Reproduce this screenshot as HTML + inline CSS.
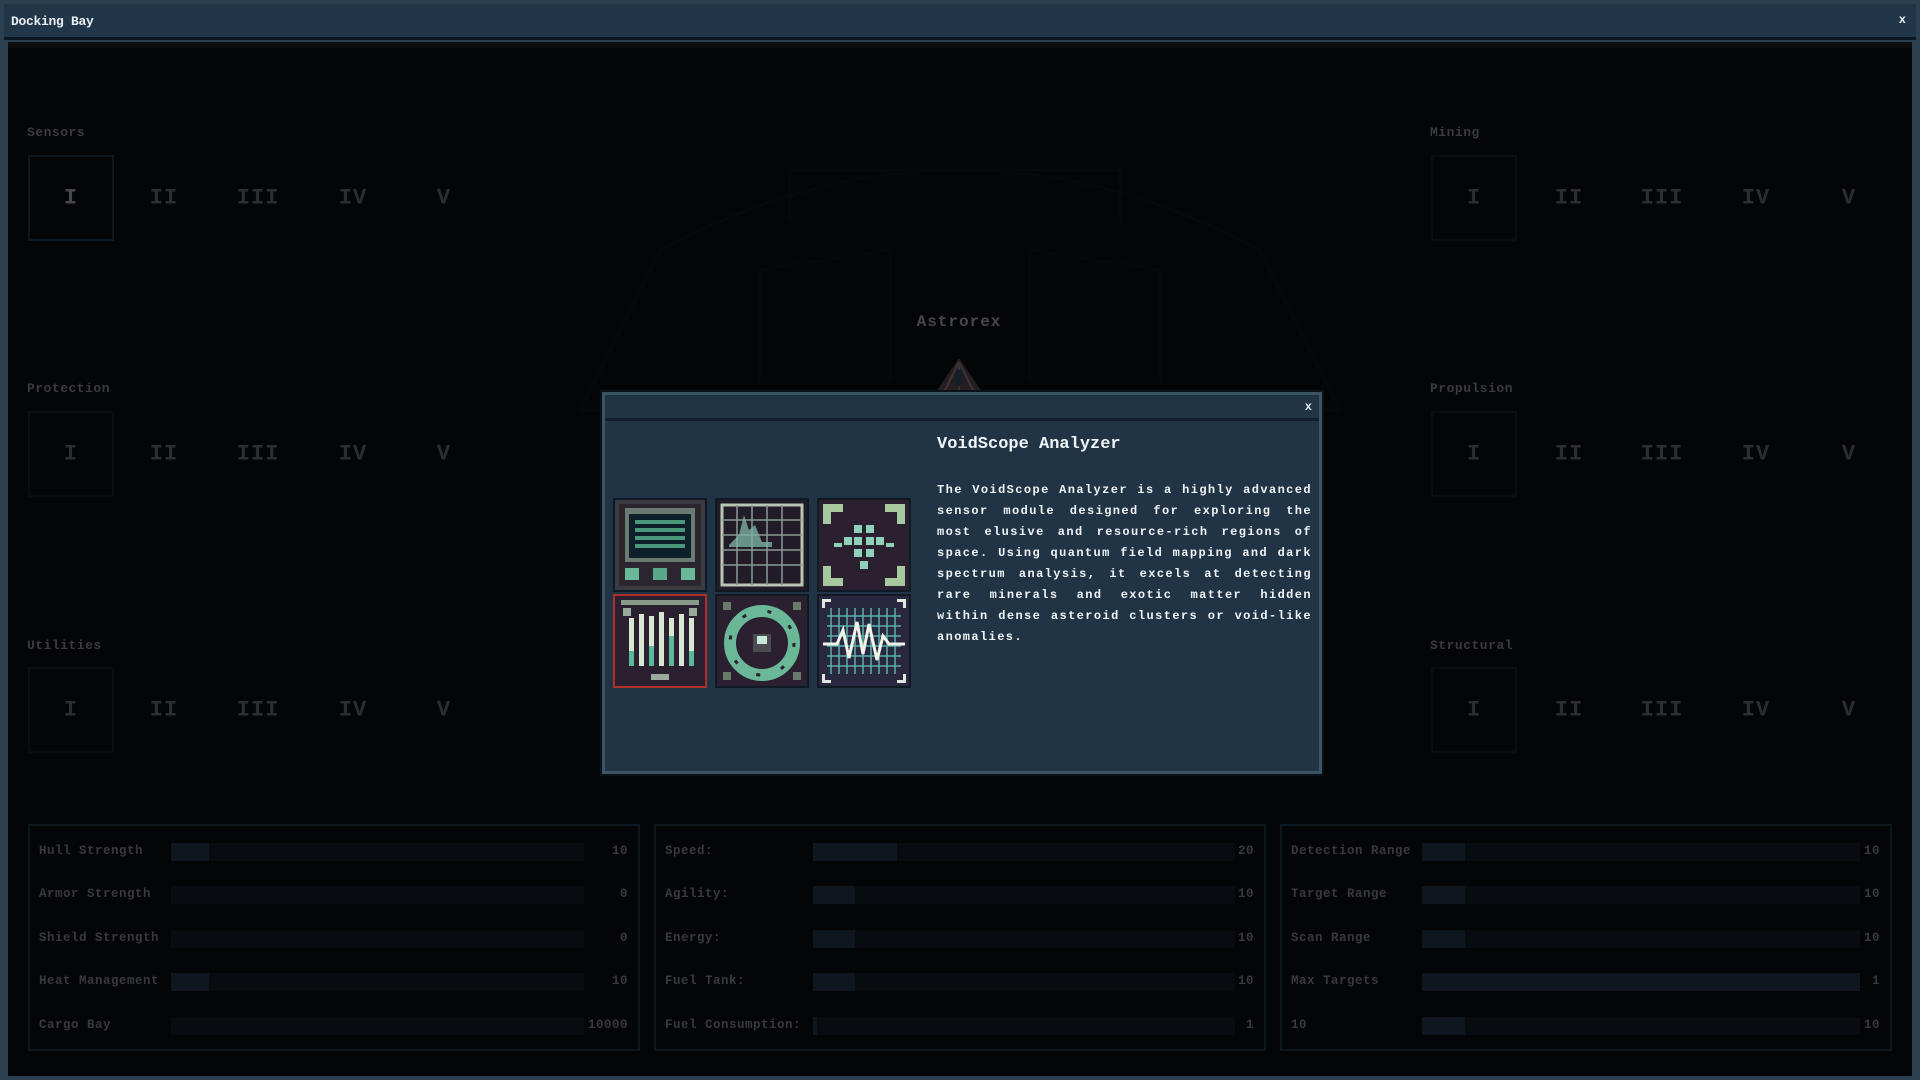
<!DOCTYPE html>
<html><head><meta charset="utf-8"><style>
*{margin:0;padding:0;box-sizing:border-box}
body{width:1920px;height:1080px;background:#2b4152;position:relative;overflow:hidden;font-family:"Liberation Mono",monospace;font-weight:bold}
.abs{position:absolute}
#title{left:4px;top:4px;width:1912px;height:36px;background:#22364a;border-bottom:3px solid #0d1822}
#title span{position:absolute;left:7px;top:10px;color:#e8eef2;font-size:13px;letter-spacing:-0.3px}
#title b{position:absolute;right:10px;top:9px;color:#e8eef2;font-size:12px}
#main{left:8px;top:42px;width:1904px;height:1034px;background:#040506;border-top:6px solid #0b0e10}
.lbl{color:#383c40;font-size:13px;letter-spacing:0.5px}
.num{color:#2a2e32;font-size:22px;transform:translate(-50%,-50%);font-family:"Liberation Mono",monospace;font-weight:bold;letter-spacing:1px}
.num.act{color:#46494c}
.box{border:2px solid #080d11;width:86px;height:86px}
.box.act{border-color:#0e1820}
.panel{border:2px solid #0c1820;height:227px;top:824px}
.srow{position:absolute;left:0;right:0;height:20px;font-size:12.5px;color:#363a3e;letter-spacing:0.5px}
.srow .l{position:absolute;top:1px}
.srow .bar{position:absolute;top:0;height:18px;background:#080b0f}
.srow .bar i{position:absolute;left:0;top:0;bottom:0;background:#0e1720}
.srow .v{position:absolute;top:1px;text-align:right}
#modal{left:602px;top:392px;width:720px;height:382px;background:#213446;border:3px solid #3a5466;box-shadow:0 0 0 2px #0a1218}
#mh{position:absolute;left:0;top:0;right:0;height:26px;border-bottom:3px solid #112030}
#mh b{position:absolute;right:7px;top:5px;color:#e8eef2;font-size:12px}
#mt{position:absolute;left:332px;top:40px;color:#f0f4f6;font-size:17px;letter-spacing:0px}
#md{position:absolute;left:332px;top:85px;width:375px;color:#f0f4f6;font-size:12px;line-height:21px;text-align:justify;letter-spacing:1.4px}
.tile{position:absolute;width:94px;height:94px;background:#0e1a24;padding:2px}
.tile svg{display:block;width:90px;height:90px}
</style></head><body>
<div id="title" class="abs"><span>Docking Bay</span><b>x</b></div>
<div id="main" class="abs"></div>

<svg class="abs" style="left:560px;top:130px" width="800" height="290" viewBox="0 0 800 290">
<g fill="none" stroke="#060809" stroke-width="3">
<path d="M230 40 H560 V90 H230Z"/><path d="M100 120 Q400 -40 700 120 L780 280 H20Z"/>
<path d="M200 140 L330 120 V250 H200Z"/><path d="M600 140 L470 120 V250 H600Z"/>
</g></svg>

<div class="abs lbl" style="left:27px;top:125px">Sensors</div>
<div class="abs lbl" style="left:27px;top:381px">Protection</div>
<div class="abs lbl" style="left:27px;top:638px">Utilities</div>
<div class="abs lbl" style="left:1430px;top:125px">Mining</div>
<div class="abs lbl" style="left:1430px;top:381px">Propulsion</div>
<div class="abs lbl" style="left:1430px;top:638px">Structural</div>

<div class="abs box act" style="left:28px;top:155px"></div>
<div class="abs box" style="left:28px;top:411px"></div>
<div class="abs box" style="left:28px;top:667px"></div>
<div class="abs box" style="left:1431px;top:155px"></div>
<div class="abs box" style="left:1431px;top:411px"></div>
<div class="abs box" style="left:1431px;top:667px"></div>

<div class="abs num act" style="left:71px;top:198px">I</div>
<div class="abs num" style="left:164px;top:198px">II</div>
<div class="abs num" style="left:258px;top:198px">III</div>
<div class="abs num" style="left:353px;top:198px">IV</div>
<div class="abs num" style="left:444px;top:198px">V</div>
<div class="abs num" style="left:71px;top:454px">I</div>
<div class="abs num" style="left:164px;top:454px">II</div>
<div class="abs num" style="left:258px;top:454px">III</div>
<div class="abs num" style="left:353px;top:454px">IV</div>
<div class="abs num" style="left:444px;top:454px">V</div>
<div class="abs num" style="left:71px;top:710px">I</div>
<div class="abs num" style="left:164px;top:710px">II</div>
<div class="abs num" style="left:258px;top:710px">III</div>
<div class="abs num" style="left:353px;top:710px">IV</div>
<div class="abs num" style="left:444px;top:710px">V</div>
<div class="abs num" style="left:1474px;top:198px">I</div>
<div class="abs num" style="left:1569px;top:198px">II</div>
<div class="abs num" style="left:1662px;top:198px">III</div>
<div class="abs num" style="left:1756px;top:198px">IV</div>
<div class="abs num" style="left:1849px;top:198px">V</div>
<div class="abs num" style="left:1474px;top:454px">I</div>
<div class="abs num" style="left:1569px;top:454px">II</div>
<div class="abs num" style="left:1662px;top:454px">III</div>
<div class="abs num" style="left:1756px;top:454px">IV</div>
<div class="abs num" style="left:1849px;top:454px">V</div>
<div class="abs num" style="left:1474px;top:710px">I</div>
<div class="abs num" style="left:1569px;top:710px">II</div>
<div class="abs num" style="left:1662px;top:710px">III</div>
<div class="abs num" style="left:1756px;top:710px">IV</div>
<div class="abs num" style="left:1849px;top:710px">V</div>

<div class="abs" style="left:890px;top:313px;width:138px;text-align:center;color:#44484c;font-size:16px;letter-spacing:1px">Astrorex</div>
<svg class="abs" style="left:928px;top:356px" width="62" height="36" viewBox="0 0 62 36">
<path d="M31 2 L8 36 H54Z" fill="#241e20"/><path d="M31 6 L16 36 M31 6 L46 36 M31 6 V36" stroke="#3e3234" stroke-width="2"/>
<rect x="28" y="14" width="6" height="16" fill="#141f2c"/></svg>

<div class="abs panel" style="left:28px;width:612px">
<div class="srow" style="top:17px"><span class="l" style="left:9px">Hull Strength</span><span class="bar" style="left:141px;width:413px"><i style="width:38px"></i></span><span class="v" style="right:10px">10</span></div>
<div class="srow" style="top:60px"><span class="l" style="left:9px">Armor Strength</span><span class="bar" style="left:141px;width:413px"></span><span class="v" style="right:10px">0</span></div>
<div class="srow" style="top:104px"><span class="l" style="left:9px">Shield Strength</span><span class="bar" style="left:141px;width:413px"></span><span class="v" style="right:10px">0</span></div>
<div class="srow" style="top:147px"><span class="l" style="left:9px">Heat Management</span><span class="bar" style="left:141px;width:413px"><i style="width:38px"></i></span><span class="v" style="right:10px">10</span></div>
<div class="srow" style="top:191px"><span class="l" style="left:9px">Cargo Bay</span><span class="bar" style="left:141px;width:413px"></span><span class="v" style="right:10px">10000</span></div>
</div>
<div class="abs panel" style="left:654px;width:612px">
<div class="srow" style="top:17px"><span class="l" style="left:9px">Speed:</span><span class="bar" style="left:157px;width:422px"><i style="width:84px"></i></span><span class="v" style="right:10px">20</span></div>
<div class="srow" style="top:60px"><span class="l" style="left:9px">Agility:</span><span class="bar" style="left:157px;width:422px"><i style="width:42px"></i></span><span class="v" style="right:10px">10</span></div>
<div class="srow" style="top:104px"><span class="l" style="left:9px">Energy:</span><span class="bar" style="left:157px;width:422px"><i style="width:42px"></i></span><span class="v" style="right:10px">10</span></div>
<div class="srow" style="top:147px"><span class="l" style="left:9px">Fuel Tank:</span><span class="bar" style="left:157px;width:422px"><i style="width:42px"></i></span><span class="v" style="right:10px">10</span></div>
<div class="srow" style="top:191px"><span class="l" style="left:9px">Fuel Consumption:</span><span class="bar" style="left:157px;width:422px"><i style="width:4px"></i></span><span class="v" style="right:10px">1</span></div>
</div>
<div class="abs panel" style="left:1280px;width:612px">
<div class="srow" style="top:17px"><span class="l" style="left:9px">Detection Range</span><span class="bar" style="left:140px;width:438px"><i style="width:43px"></i></span><span class="v" style="right:10px">10</span></div>
<div class="srow" style="top:60px"><span class="l" style="left:9px">Target Range</span><span class="bar" style="left:140px;width:438px"><i style="width:43px"></i></span><span class="v" style="right:10px">10</span></div>
<div class="srow" style="top:104px"><span class="l" style="left:9px">Scan Range</span><span class="bar" style="left:140px;width:438px"><i style="width:43px"></i></span><span class="v" style="right:10px">10</span></div>
<div class="srow" style="top:147px"><span class="l" style="left:9px">Max Targets</span><span class="bar" style="left:140px;width:438px"><i style="width:438px"></i></span><span class="v" style="right:10px">1</span></div>
<div class="srow" style="top:191px"><span class="l" style="left:9px">10</span><span class="bar" style="left:140px;width:438px"><i style="width:43px"></i></span><span class="v" style="right:10px">10</span></div>
</div>

<div id="modal" class="abs">
<div id="mh"><b>x</b></div>
<div id="mt">VoidScope Analyzer</div>
<div id="md">The VoidScope Analyzer is a highly advanced sensor module designed for exploring the most elusive and resource-rich regions of space. Using quantum field mapping and dark spectrum analysis, it excels at detecting rare minerals and exotic matter hidden within dense asteroid clusters or void-like anomalies.</div>

<div class="tile" style="left:8px;top:103px"><svg viewBox="0 0 90 90"><rect width="90" height="90" fill="#3a3a40"/><rect x="4" y="4" width="82" height="82" fill="#2b2530"/><rect x="10" y="8" width="70" height="54" fill="#6a7a72"/><rect x="14" y="14" width="62" height="44" fill="#10202a"/><g fill="#5fbf98" opacity=".75"><rect x="20" y="20" width="50" height="4"/><rect x="20" y="28" width="50" height="4"/><rect x="20" y="36" width="50" height="4"/><rect x="20" y="44" width="50" height="4"/></g><rect x="10" y="68" width="14" height="12" fill="#6ab89a"/><rect x="38" y="68" width="14" height="12" fill="#5aa88a"/><rect x="66" y="68" width="14" height="12" fill="#6ab89a"/></svg></div>
<div class="tile" style="left:110px;top:103px"><svg viewBox="0 0 90 90"><rect width="90" height="90" fill="#221c28"/><rect x="5" y="5" width="80" height="80" fill="none" stroke="#b8c4b4" stroke-width="3"/><g stroke="#8a9a92" stroke-width="1.5"><path d="M5 20H85M5 35H85M5 50H85M5 65H85M20 5V85M35 5V85M50 5V85M65 5V85"/></g><path d="M12 45 L22 35 L27 15 L32 30 L38 25 L45 42 L55 42 V47 H12Z" fill="#7ab0a0" opacity=".8"/></svg></div>
<div class="tile" style="left:212px;top:103px"><svg viewBox="0 0 90 90"><rect width="90" height="90" fill="#2a2030"/><g fill="#a8c8a0"><path d="M4 4H24V12H12V24H4Z"/><path d="M86 4H66V12H78V24H86Z"/><path d="M4 86H24V78H12V66H4Z"/><path d="M86 86H66V78H78V66H86Z"/></g><g fill="#8fd0b8"><rect x="35" y="25" width="8" height="8"/><rect x="47" y="25" width="8" height="8"/><rect x="25" y="37" width="8" height="8"/><rect x="35" y="37" width="8" height="8"/><rect x="47" y="37" width="8" height="8"/><rect x="57" y="37" width="8" height="8"/><rect x="35" y="49" width="8" height="8"/><rect x="47" y="49" width="8" height="8"/><rect x="41" y="61" width="8" height="8"/><rect x="15" y="43" width="8" height="4"/><rect x="67" y="43" width="8" height="4"/></g></svg></div>
<div class="tile" style="left:8px;top:199px;background:#b03028"><svg viewBox="0 0 90 90"><rect width="90" height="90" fill="#2a2030"/><rect x="6" y="4" width="78" height="5" fill="#8a9a8a"/><g fill="#d8e8d0"><rect x="14" y="22" width="5" height="48"/><rect x="24" y="18" width="5" height="52"/><rect x="34" y="20" width="5" height="50"/><rect x="44" y="16" width="5" height="54"/><rect x="54" y="22" width="5" height="48"/><rect x="64" y="18" width="5" height="52"/><rect x="74" y="22" width="5" height="48"/></g><g fill="#5ab89a"><rect x="14" y="55" width="5" height="15"/><rect x="34" y="50" width="5" height="20"/><rect x="54" y="40" width="5" height="30"/><rect x="74" y="55" width="5" height="15"/></g><g fill="#9aaa9a"><rect x="8" y="12" width="8" height="8"/><rect x="74" y="12" width="8" height="8"/><rect x="36" y="78" width="18" height="6"/></g></svg></div>
<div class="tile" style="left:110px;top:199px"><svg viewBox="0 0 90 90"><rect width="90" height="90" fill="#2a2030"/><circle cx="45" cy="47" r="32" fill="none" stroke="#6ab898" stroke-width="12"/><circle cx="45" cy="47" r="32" fill="none" stroke="#2a2030" stroke-width="3" stroke-dasharray="4 22"/><rect x="36" y="38" width="18" height="18" fill="#4a4a50"/><rect x="40" y="40" width="10" height="8" fill="#c8e8d8"/><g fill="#6a7a6a"><rect x="6" y="6" width="8" height="8"/><rect x="76" y="6" width="8" height="8"/><rect x="6" y="76" width="8" height="8"/><rect x="76" y="76" width="8" height="8"/></g></svg></div>
<div class="tile" style="left:212px;top:199px"><svg viewBox="0 0 90 90"><rect width="90" height="90" fill="#2a2840"/><g stroke="#5ab0a8" stroke-width="1.5"><path d="M8 20H82M8 30H82M8 40H82M8 50H82M8 60H82M8 70H82M12 12V78M20 12V78M28 12V78M36 12V78M44 12V78M52 12V78M60 12V78M68 12V78M76 12V78"/></g><path d="M4 48 H18 L24 34 L30 62 L38 26 L44 58 L50 28 L58 64 L64 40 L70 48 H86" fill="none" stroke="#f0f4e8" stroke-width="3"/><g fill="#e0e8e0"><path d="M3 3H12V6H6V12H3Z"/><path d="M87 3H78V6H84V12H87Z"/><path d="M3 87H12V84H6V78H3Z"/><path d="M87 87H78V84H84V78H87Z"/></g></svg></div>
</div>
</body></html>
